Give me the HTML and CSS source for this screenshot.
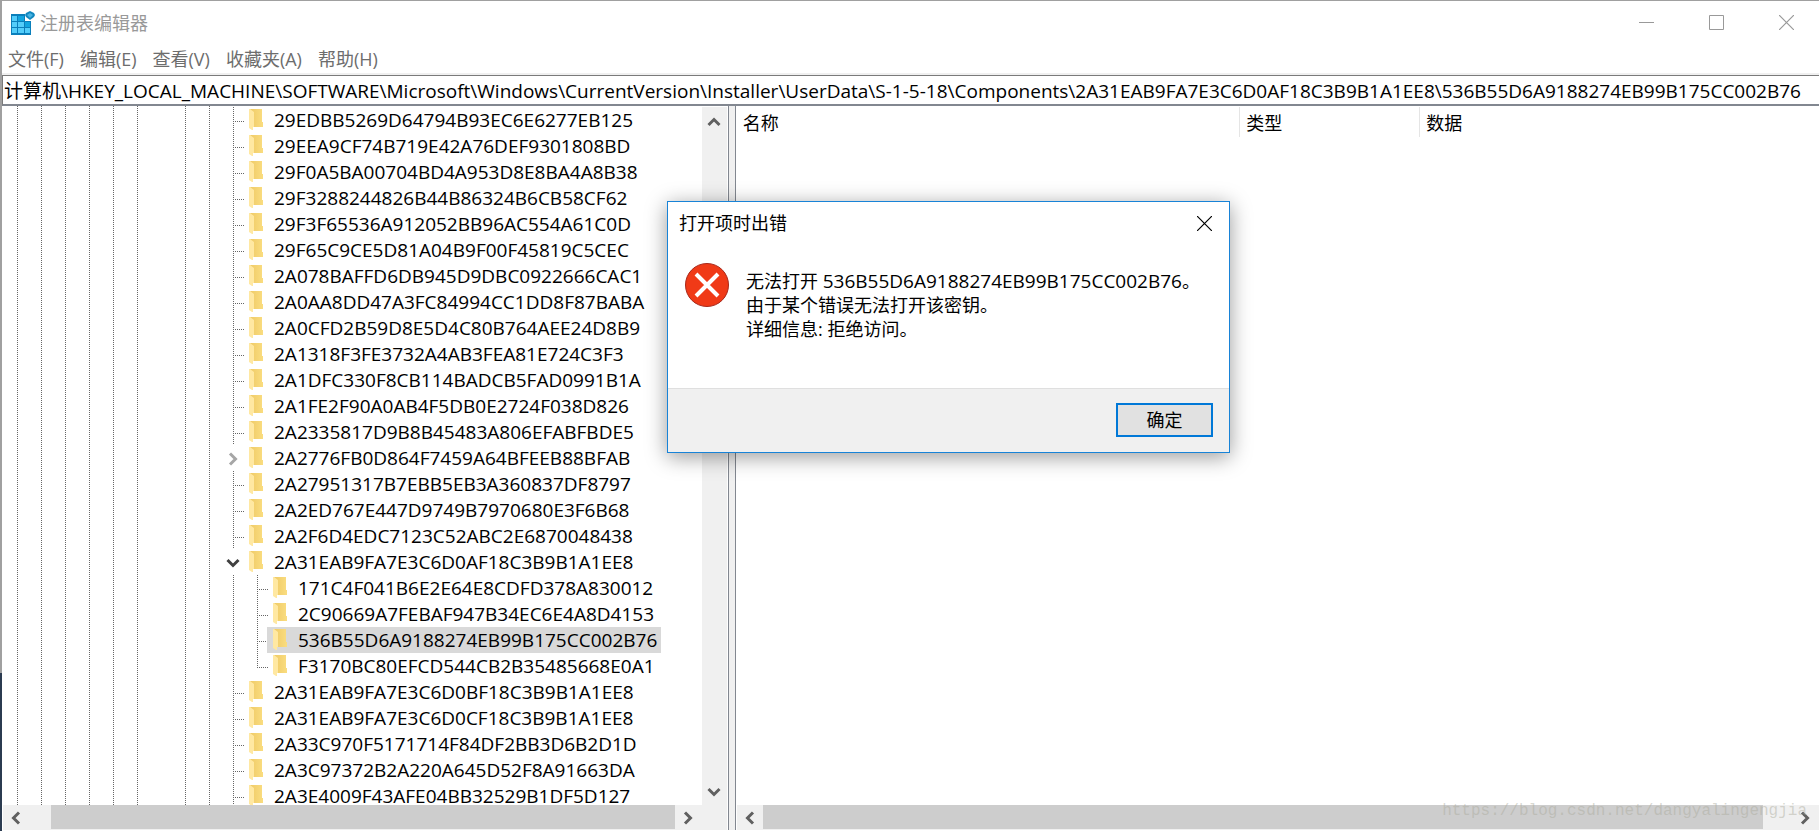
FILE: index.html
```html
<!DOCTYPE html>
<html lang="zh-CN">
<head>
<meta charset="utf-8">
<title>注册表编辑器</title>
<link rel="stylesheet" href="styles.css">
</head>
<body>
<svg class="defs" aria-hidden="true">
  <linearGradient id="folder-body">
    <stop offset="0" stop-color="#efca66"/>
    <stop offset="1" stop-color="#fadd80"/>
  </linearGradient>
  <symbol id="folder" viewBox="0 0 14 22">
    <path d="M1 0h12v13h1v5H4z" fill="url(#folder-body)"/>
    <path d="M0 0h1l4 3v15h-1v3H3l-3-2z" fill="#ffe8a2"/>
  </symbol>
  <symbol id="chevron" viewBox="0 0 16 16">
    <path d="M2.500 5l5.500 5.500L13.500 5" fill="none" stroke="currentColor" stroke-width="3"/>
  </symbol>
  <symbol id="close" viewBox="0 0 15 15">
    <path d="M0 0l15 15M15 0L0 15" fill="none" stroke="currentColor" stroke-width="1.200"/>
  </symbol>
</svg>
<div class="window">
  <header class="titlebar">
    <svg class="app-icon" viewBox="0 0 24 24" aria-hidden="true">
      <path d="M0 3h14v7h6v14H0z" fill="#0a7fbb"/>
      <path d="M1 5h5v5H1zM1 11h5v5H1zM1 17h5v5H1zM7 17h6v5H7zM14 17h5v5h-5zM7 11h6v5H7z" fill="#53cdfa"/>
      <path d="M7 5h6v5H7zM14 11h5v5h-5z" fill="#12a5e0"/>
      <path d="M19 0l4 2 1 2-1 2-4 3-4-3-1-2 1-2z" fill="#1287bf"/>
      <path d="M19 2l3 2-3 3-3-3z" fill="#49b4e2"/>
    </svg>
    <h1 class="title">注册表编辑器</h1>
    <div class="controls">
      <button class="control" aria-label="最小化"><svg class="glyph" viewBox="0 0 15 15"><path d="M0 7.500h15" stroke="currentColor"/></svg></button>
      <button class="control" aria-label="最大化"><svg class="glyph" viewBox="0 0 15 15"><path d="M.5.5h14v14H.5z" fill="none" stroke="currentColor"/></svg></button>
      <button class="control" aria-label="关闭"><svg class="glyph"><use href="#close"/></svg></button>
    </div>
  </header>
  <nav class="menu">
    <button>文件(F)</button>
    <button>编辑(E)</button>
    <button>查看(V)</button>
    <button>收藏夹(A)</button>
    <button>帮助(H)</button>
  </nav>
  <input class="address" aria-label="地址" value="计算机\HKEY_LOCAL_MACHINE\SOFTWARE\Microsoft\Windows\CurrentVersion\Installer\UserData\S-1-5-18\Components\2A31EAB9FA7E3C6D0AF18C3B9B1A1EE8\536B55D6A9188274EB99B175CC002B76">
  <main class="panes">
    <section class="pane tree-pane">
      <div class="tree-view">
        <ul class="tree">
          <li class="node"><svg class="folder"><use href="#folder"/></svg><span class="key">29EDBB5269D64794B93EC6E6277EB125</span></li>
          <li class="node"><svg class="folder"><use href="#folder"/></svg><span class="key">29EEA9CF74B719E42A76DEF9301808BD</span></li>
          <li class="node"><svg class="folder"><use href="#folder"/></svg><span class="key">29F0A5BA00704BD4A953D8E8BA4A8B38</span></li>
          <li class="node"><svg class="folder"><use href="#folder"/></svg><span class="key">29F3288244826B44B86324B6CB58CF62</span></li>
          <li class="node"><svg class="folder"><use href="#folder"/></svg><span class="key">29F3F65536A912052BB96AC554A61C0D</span></li>
          <li class="node"><svg class="folder"><use href="#folder"/></svg><span class="key">29F65C9CE5D81A04B9F00F45819C5CEC</span></li>
          <li class="node"><svg class="folder"><use href="#folder"/></svg><span class="key">2A078BAFFD6DB945D9DBC0922666CAC1</span></li>
          <li class="node"><svg class="folder"><use href="#folder"/></svg><span class="key">2A0AA8DD47A3FC84994CC1DD8F87BABA</span></li>
          <li class="node"><svg class="folder"><use href="#folder"/></svg><span class="key">2A0CFD2B59D8E5D4C80B764AEE24D8B9</span></li>
          <li class="node"><svg class="folder"><use href="#folder"/></svg><span class="key">2A1318F3FE3732A4AB3FEA81E724C3F3</span></li>
          <li class="node"><svg class="folder"><use href="#folder"/></svg><span class="key">2A1DFC330F8CB114BADCB5FAD0991B1A</span></li>
          <li class="node"><svg class="folder"><use href="#folder"/></svg><span class="key">2A1FE2F90A0AB4F5DB0E2724F038D826</span></li>
          <li class="node"><svg class="folder"><use href="#folder"/></svg><span class="key">2A2335817D9B8B45483A806EFABFBDE5</span></li>
          <li class="node branch"><button class="toggle" aria-label="展开"><svg class="chevron right"><use href="#chevron"/></svg></button><svg class="folder"><use href="#folder"/></svg><span class="key">2A2776FB0D864F7459A64BFEEB88BFAB</span></li>
          <li class="node"><svg class="folder"><use href="#folder"/></svg><span class="key">2A27951317B7EBB5EB3A360837DF8797</span></li>
          <li class="node"><svg class="folder"><use href="#folder"/></svg><span class="key">2A2ED767E447D9749B7970680E3F6B68</span></li>
          <li class="node"><svg class="folder"><use href="#folder"/></svg><span class="key">2A2F6D4EDC7123C52ABC2E6870048438</span></li>
          <li class="node branch"><button class="toggle open" aria-label="折叠"><svg class="chevron"><use href="#chevron"/></svg></button><svg class="folder"><use href="#folder"/></svg><span class="key">2A31EAB9FA7E3C6D0AF18C3B9B1A1EE8</span></li>
          <li class="group">
            <ul class="children">
              <li class="node"><svg class="folder"><use href="#folder"/></svg><span class="key">171C4F041B6E2E64E8CDFD378A830012</span></li>
              <li class="node"><svg class="folder"><use href="#folder"/></svg><span class="key">2C90669A7FEBAF947B34EC6E4A8D4153</span></li>
              <li class="node selected"><svg class="folder"><use href="#folder"/></svg><span class="key">536B55D6A9188274EB99B175CC002B76</span></li>
              <li class="node last"><svg class="folder"><use href="#folder"/></svg><span class="key">F3170BC80EFCD544CB2B35485668E0A1</span></li>
            </ul>
          </li>
          <li class="node"><svg class="folder"><use href="#folder"/></svg><span class="key">2A31EAB9FA7E3C6D0BF18C3B9B1A1EE8</span></li>
          <li class="node"><svg class="folder"><use href="#folder"/></svg><span class="key">2A31EAB9FA7E3C6D0CF18C3B9B1A1EE8</span></li>
          <li class="node"><svg class="folder"><use href="#folder"/></svg><span class="key">2A33C970F5171714F84DF2BB3D6B2D1D</span></li>
          <li class="node"><svg class="folder"><use href="#folder"/></svg><span class="key">2A3C97372B2A220A645D52F8A91663DA</span></li>
          <li class="node"><svg class="folder"><use href="#folder"/></svg><span class="key">2A3E4009F43AFE04BB32529B1DF5D127</span></li>
        </ul>
        <div class="vscroll">
          <button aria-label="向上滚动"><svg class="chevron up"><use href="#chevron"/></svg></button>
          <button aria-label="向下滚动"><svg class="chevron"><use href="#chevron"/></svg></button>
        </div>
      </div>
      <div class="hscroll tree-hscroll">
        <button class="arrow start" aria-label="向左滚动"><svg class="chevron left"><use href="#chevron"/></svg></button>
        <div class="thumb"></div>
        <button class="arrow" aria-label="向右滚动"><svg class="chevron right"><use href="#chevron"/></svg></button>
      </div>
    </section>
    <div class="splitter"></div>
    <section class="pane value-pane">
      <table class="values">
        <colgroup><col class="col-name"><col class="col-type"><col></colgroup>
        <thead><tr><th>名称</th><th>类型</th><th>数据</th></tr></thead>
      </table>
      <div class="hscroll value-hscroll">
        <button class="arrow" aria-label="向左滚动"><svg class="chevron left"><use href="#chevron"/></svg></button>
        <div class="thumb"></div>
        <button class="arrow end" aria-label="向右滚动"><svg class="chevron right"><use href="#chevron"/></svg></button>
      </div>
    </section>
  </main>
  <div class="watermark">https://blog.csdn.net/dangyalingengjia</div>
  <div class="dialog" role="alertdialog" aria-labelledby="dialog-title">
    <header class="dialog-head">
      <h2 class="dialog-title" id="dialog-title">打开项时出错</h2>
      <button class="dialog-close" aria-label="关闭"><svg class="glyph"><use href="#close"/></svg></button>
    </header>
    <div class="dialog-body">
      <svg class="error-icon" viewBox="0 0 44 44" aria-hidden="true">
        <circle cx="22" cy="22" r="21.500" fill="#f03a17" stroke="#a8281a"/>
        <path d="M11 11l22 22M33 11L11 33" stroke="#fff" stroke-width="4"/>
      </svg>
      <p class="message">无法打开 <span class="code">536B55D6A9188274EB99B175CC002B76</span>。<br>由于某个错误无法打开该密钥。<br>详细信息: 拒绝访问。</p>
    </div>
    <footer class="dialog-foot"><button class="ok">确定</button></footer>
  </div>
</div>
</body>
</html>
```

FILE: styles.css
```css
* {
  box-sizing: border-box;
}

body {
  margin: 0;
  font: 18px/24px "Open Sans", "Noto Sans CJK SC", sans-serif;
  color: #000;
  background: #fff;
}

button {
  display: flex;
  align-items: center;
  justify-content: center;
  padding: 0;
  border: 0;
  background: none;
  color: inherit;
  font: inherit;
}

ul {
  margin: 0;
  padding: 0;
  list-style: none;
}

.defs {
  position: absolute;
  width: 0;
  height: 0;
}

.window {
  position: relative;
  display: flex;
  flex-direction: column;
  height: 100vh;
  overflow: hidden;
  border-top: 1px solid #a0a0a0;
  border-left: 2px solid #85878c;
  border-image: linear-gradient(#a0a0a0 81%, #2b3b50 81%) 1 0 0 2;
}

.titlebar {
  display: flex;
  align-items: center;
  flex: none;
  height: 43px;
  padding-left: 9px;
}

.app-icon {
  width: 24px;
  height: 24px;
}

.title {
  margin: 0 auto 0 5px;
  font-size: 18px;
  font-weight: 400;
  color: #999;
}

.controls {
  display: flex;
  margin-right: -2px;
}

.control {
  width: 70px;
  height: 43px;
  color: #999;
}

.glyph {
  width: 15px;
  height: 15px;
}

.menu {
  display: flex;
  flex: none;
  gap: 16px;
  height: 31px;
  padding: 0 6px;
  border-bottom: 2px solid #f0f0f0;
  color: #6d6d6d;
}

.address {
  flex: none;
  width: 100%;
  height: 31px;
  padding: 0 1px 1px;
  border: 1px solid #7a7a7a;
  border-right: 0;
  border-bottom: 2px solid #828790;
  outline: 0;
  font: 19px/26px "Open Sans", "Noto Sans CJK SC", sans-serif;
}

.panes {
  display: flex;
  flex: 1;
  min-height: 0;
  padding-bottom: 1px;
}

.pane {
  display: flex;
  flex-direction: column;
  min-width: 0;
}

.tree-pane {
  flex: 0 0 calc(40% - 1px);
  padding-right: 1px;
}

.tree-view {
  display: flex;
  flex: 1;
  min-height: 0;
}

.tree {
  --dots: repeating-linear-gradient(#666 0 1px, transparent 1px 2px);
  flex: 1;
  overflow: hidden;
  padding: 1px 0 0 231px;
  background:
    var(--dots) 15px 0 / 1px 100% no-repeat,
    var(--dots) 39px 0 / 1px 100% no-repeat,
    var(--dots) 63px 0 / 1px 100% no-repeat,
    var(--dots) 87px 0 / 1px 100% no-repeat,
    var(--dots) 111px 0 / 1px 100% no-repeat,
    var(--dots) 135px 0 / 1px 100% no-repeat,
    var(--dots) 183px 0 / 1px 100% no-repeat,
    var(--dots) 207px 0 / 1px 100% no-repeat;
}

.node {
  display: flex;
  align-items: center;
  height: 26px;
  padding-left: 16px;
  background:
    var(--dots) 0 0 / 1px 100% no-repeat,
    repeating-linear-gradient(90deg, #666 0 1px, transparent 1px 2px) 2px 14px / 10px 1px no-repeat;
}

.node.branch {
  padding-left: 0;
  background: none;
}

.node.last {
  background-size: 1px 15px, 10px 1px;
}

.group {
  padding-left: 24px;
  background: var(--dots) 0 0 / 1px 100% no-repeat;
}

.toggle {
  width: 16px;
  height: 18px;
  margin-left: -8px;
  margin-right: 8px;
  padding-top: 2px;
  color: #a6a6a6;
}

.toggle.open {
  color: #404040;
}

.folder {
  flex: none;
  width: 14px;
  height: 22px;
}

.key {
  padding: 0 4px 0 11px;
  font-size: 19px;
  line-height: 26px;
}

.selected {
  width: max-content;
}

.selected .key,
.selected .folder {
  background: #d9d9d9;
}

.selected .folder {
  box-sizing: content-box;
  margin-left: -6px;
  padding: 2px 0 2px 6px;
}

.chevron {
  flex: none;
  width: 16px;
  height: 16px;
}

.chevron.right {
  transform: rotate(-90deg);
}

.chevron.left {
  transform: rotate(90deg);
}

.chevron.up {
  transform: rotate(180deg);
}

.vscroll {
  display: flex;
  flex: none;
  flex-direction: column;
  justify-content: space-between;
  width: 25px;
  margin-top: 1px;
  padding: 7px 0 5px;
  background: #f0f0f0;
  color: #606060;
}

.hscroll {
  display: flex;
  flex: none;
  height: 25px;
  background: #f0f0f0;
  color: #606060;
}

.tree-hscroll {
  padding-right: 26px;
  margin-left: 1px;
}

.arrow {
  flex: none;
  width: 26px;
}

.arrow.start {
  width: 48px;
  padding-right: 22px;
}

.arrow.end {
  width: 56px;
  padding-left: 28px;
}

.thumb {
  flex: 1;
  margin-bottom: 1px;
  background: #cdcdcd;
}

.splitter {
  flex: none;
  width: 8px;
  border: solid #828790;
  border-width: 0 1px;
  background: #f0f0f0;
}

.value-pane {
  flex: 1;
  justify-content: space-between;
  padding-left: 1px;
}

.values {
  width: 100%;
  margin-top: 1px;
  border-collapse: collapse;
  table-layout: fixed;
}

.col-name {
  width: 503px;
}

.col-type {
  width: 180px;
}

.values th {
  height: 30px;
  padding: 1px 6px 0;
  border-right: 1px solid #e5e5e5;
  text-align: left;
  font-weight: 400;
}

.values th:last-child {
  border-right: 0;
}

.watermark {
  position: absolute;
  right: 12px;
  bottom: 8px;
  font: 16px/24px "Liberation Mono", monospace;
  color: rgb(170 170 155 / 45%);
}

.dialog {
  position: absolute;
  top: 200px;
  left: 665px;
  width: 563px;
  border: 1px solid #1883d7;
  background: #fff;
  box-shadow: 0 4px 20px rgb(0 0 0 / 40%);
}

.dialog-head {
  display: flex;
  align-items: center;
  justify-content: space-between;
  height: 42px;
  padding: 0 17px 0 11px;
}

.dialog-title {
  margin: 0;
  font-size: 18px;
  font-weight: 400;
}

.dialog-body {
  display: flex;
  gap: 17px;
  padding: 19px 17px 47px;
}

.error-icon {
  flex: none;
  width: 44px;
  height: 44px;
}

.message {
  margin: 6px 0 0;
}

.code {
  font-size: 19px;
}

.dialog-foot {
  display: flex;
  justify-content: flex-end;
  padding: 14px 16px 15px;
  border-top: 1px solid #dfdfdf;
  background: #f0f0f0;
}

.ok {
  width: 97px;
  height: 34px;
  border: 2px solid #0078d7;
  background: #e1e1e1;
}
```
